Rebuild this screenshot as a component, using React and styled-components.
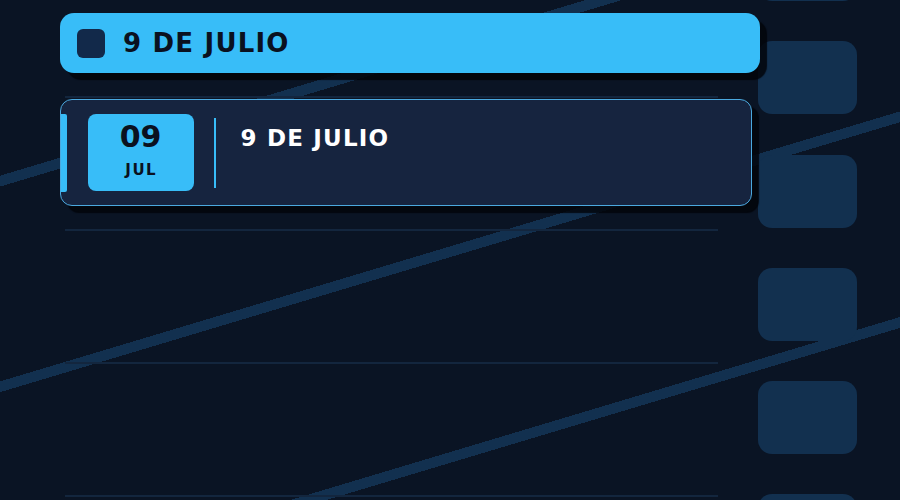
import React from "react";
import styled, { createGlobalStyle } from "styled-components";

const GlobalStyle = createGlobalStyle`
  html, body {
    margin: 0;
    padding: 0;
    background: #0a1424;
    overflow: hidden;
  }
  body {
    font-family: "DejaVu Sans", sans-serif;
  }
  * { box-sizing: border-box; }
`;

const ACCENT = "#38bdf8";

// Full-viewport board with the diagonal light streaks in the backdrop.
const Page = styled.div`
  display: flex;
  width: 100vw;
  height: 100vh;
  overflow: hidden;
  background-color: #0a1424;
  background-image: repeating-linear-gradient(
    163.3deg,
    transparent 0 168.3px,
    #12304f 168.3px 178.7px,
    transparent 178.7px 197px
  );
`;

const Main = styled.main`
  position: relative;
  z-index: 1;
  flex: none;
  width: 760px;
  padding: 13px 0 0 60px;
  display: flex;
  flex-direction: column;
`;

const Banner = styled.header`
  display: flex;
  align-items: center;
  gap: 18px;
  height: 60px;
  padding: 0 17px;
  background: ${ACCENT};
  border-radius: 14px;
  box-shadow: 7px 7px 1px rgba(2, 5, 11, 0.85);
`;

const BannerMark = styled.span`
  width: 28px;
  height: 29px;
  border-radius: 6px;
  background: #12294a;
`;

const Heading = styled.h1`
  margin: 0;
  font-family: "DejaVu Sans", sans-serif;
  font-size: 26px;
  line-height: 1;
  font-weight: 700;
  letter-spacing: 1.2px;
  color: #0a1120;
`;

// Event list drawn over ruled lines, one rule every row.
const List = styled.section`
  flex: 1;
  margin-top: 23px;
  padding-top: 3px;
  position: relative;

  &::before {
    content: "";
    position: absolute;
    inset: 0 0 0 5px;
    width: 653px;
    background: repeating-linear-gradient(
      to bottom,
      #13263e 0 2px,
      transparent 2px 133px
    );
    pointer-events: none;
  }
`;

const EventCard = styled.article`
  position: relative;
  z-index: 1;
  display: flex;
  width: 692px;
  height: 107px;
  padding: 13.5px 26.5px;
  background: #16243f;
  border: 1.5px solid #4ba9df;
  border-radius: 12px;
  box-shadow: 7px 7px 1px rgba(2, 5, 11, 0.85);

  &::before {
    content: "";
    position: absolute;
    left: 0;
    top: 13.5px;
    bottom: 13.5px;
    width: 6px;
    background: ${ACCENT};
    border-radius: 0 2px 2px 0;
  }
`;

const DateBox = styled.div`
  flex: none;
  display: flex;
  flex-direction: column;
  align-items: center;
  width: 106px;
  height: 77px;
  padding-top: 8px;
  background: ${ACCENT};
  border-radius: 8px;
  color: #0a1120;
  font-weight: 700;
`;

const Day = styled.span`
  font-size: 30px;
  line-height: 30px;
`;

const Month = styled.span`
  margin-top: 11px;
  font-size: 15px;
  line-height: 15px;
  letter-spacing: 1.5px;
  padding-left: 1.5px;
`;

const Divider = styled.span`
  flex: none;
  width: 2px;
  height: 70px;
  margin: 4px 0 0 20px;
  background: ${ACCENT};
`;

const EventTitle = styled.h2`
  margin: 0 0 0 25px;
  padding-top: 11px;
  font-family: "DejaVu Sans", sans-serif;
  font-size: 23px;
  line-height: 1.2;
  font-weight: 700;
  letter-spacing: 1.2px;
  color: #ffffff;
`;

// Column of rounded tiles along the right edge, like film sprockets.
const Strip = styled.aside`
  flex: none;
  display: flex;
  flex-direction: column;
  gap: 40.3px;
  width: 99px;
  margin: -72px 0 0 -2px;
`;

const Tile = styled.div`
  flex: none;
  height: 73px;
  border-radius: 14px;
  background: #12304f;
`;

const events = [{ day: "09", month: "JUL", title: "9 DE JULIO" }];

export default function App() {
  return (
    <>
      <GlobalStyle />
      <Page>
        <Main>
          <Banner>
            <BannerMark />
            <Heading>9 DE JULIO</Heading>
          </Banner>
          <List>
            {events.map((ev) => (
              <EventCard key={ev.title}>
                <DateBox>
                  <Day>{ev.day}</Day>
                  <Month>{ev.month}</Month>
                </DateBox>
                <Divider />
                <EventTitle>{ev.title}</EventTitle>
              </EventCard>
            ))}
          </List>
        </Main>
        <Strip>
          {Array.from({ length: 6 }, (_, i) => (
            <Tile key={i} />
          ))}
        </Strip>
      </Page>
    </>
  );
}
